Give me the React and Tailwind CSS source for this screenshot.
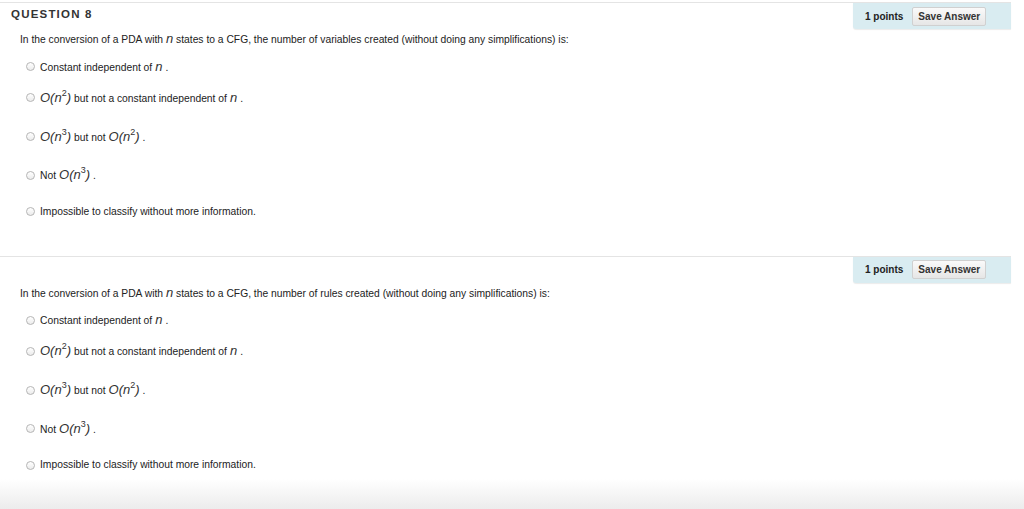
import React from "react";

function Radio() {
  return (
    <span className="inline-block h-[9px] w-[9px] shrink-0 rounded-full border border-[#b5b5b5] bg-gradient-to-b from-white to-[#ececec]" />
  );
}

function Big({ children }) {
  return <span className="text-[13px] italic text-[#333]">{children}</span>;
}

function On({ p }) {
  return (
    <Big>
      O(n<sup className="-top-[6px] text-[9px] not-italic">{p}</sup>)
    </Big>
  );
}

function Option({ h, children }) {
  return (
    <div className={`flex items-center gap-[5px] pl-[26px] ${h}`}>
      <Radio />
      <span className="flex items-baseline gap-[3px]">{children}</span>
    </div>
  );
}

function PointsBox() {
  return (
    <div className="flex h-[26px] w-[158px] items-center gap-[9px] rounded-bl-[3px] bg-[#d9ecf1] pl-[12px] shadow-[0_1px_1px_rgba(0,0,0,0.08)]">
      <span className="text-[10px] font-bold text-[#222]">1 points</span>
      <button className="h-[19px] rounded-[2px] border border-[#d0d0d0] bg-gradient-to-b from-[#fafafa] to-[#e6e6e6] px-[5px] text-[10px] font-bold text-[#333]">
        Save Answer
      </button>
    </div>
  );
}

function Options() {
  return (
    <div className="flex flex-col">
      <Option h="h-[24px]">
        <span>Constant independent of</span>
        <Big>n</Big>
        <span>.</span>
      </Option>
      <Option h="h-[38px]">
        <On p="2" />
        <span>but not a constant independent of</span>
        <Big>n</Big>
        <span>.</span>
      </Option>
      <Option h="h-[40px]">
        <On p="3" />
        <span>but not</span>
        <On p="2" />
        <span>.</span>
      </Option>
      <Option h="h-[37px]">
        <span>Not</span>
        <On p="3" />
        <span>.</span>
      </Option>
      <Option h="h-[36px]">
        <span>Impossible to classify without more information.</span>
      </Option>
    </div>
  );
}

export default function App() {
  return (
    <div
      className="relative h-[509px] w-[1024px] overflow-hidden bg-white text-[10.3px] text-[#222]"
      style={{ fontFamily: '"Liberation Sans", Arial, sans-serif' }}
    >
      <div className="mt-[2px] w-[1011px] border-t border-[#e4e4e4]">
        <div className="flex items-start justify-between">
          <div className="pl-[11px] pt-[3px] text-[11.5px] font-bold tracking-[1.2px] text-[#333]">QUESTION 8</div>
          <PointsBox />
        </div>
        <div className="pl-[20px]">In the conversion of a PDA with <Big>n</Big> states to a CFG, the number of variables created (without doing any simplifications) is:</div>
        <div className="pt-[6px]">
          <Options />
        </div>
      </div>

      <div className="mt-[26px] w-[1011px] border-t border-[#e4e4e4]">
        <div className="flex justify-end">
          <PointsBox />
        </div>
        <div className="pl-[20px]">In the conversion of a PDA with <Big>n</Big> states to a CFG, the number of rules created (without doing any simplifications) is:</div>
        <div className="pt-[6px]">
          <Options />
        </div>
      </div>

      <div className="absolute bottom-0 left-0 h-[30px] w-full bg-gradient-to-b from-white to-[#ececec]" />
    </div>
  );
}
